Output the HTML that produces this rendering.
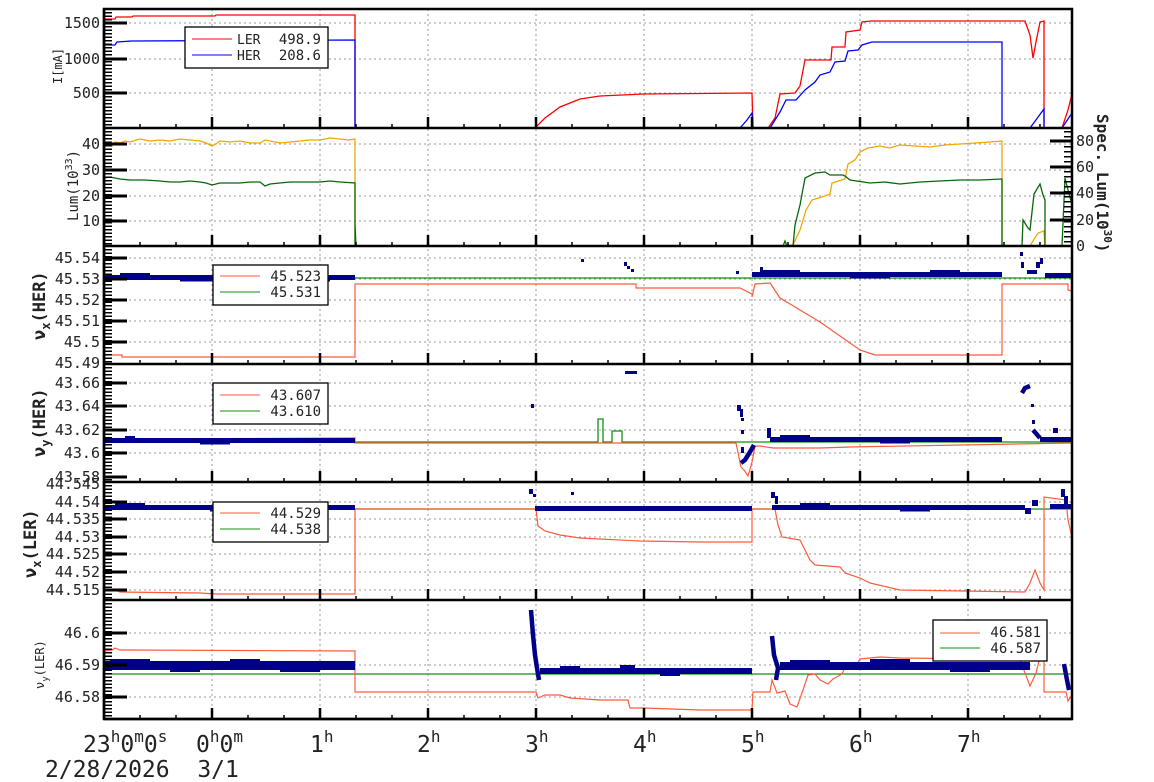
<!DOCTYPE html>
<html><head><meta charset="utf-8"><style>
html,body{margin:0;padding:0;background:#fff;}
svg{display:block;}
text{font-family:"DejaVu Sans Mono","Liberation Mono",monospace;fill:#222;}
.g{stroke:#999;stroke-width:1;stroke-dasharray:2 3;fill:none;}
.ax{stroke:#000;stroke-width:2.5;fill:none;}
.mj{stroke:#000;stroke-width:3;}
.r{stroke:#ff5a3c;stroke-width:1.2;fill:none;}
.rr{stroke:#f00;stroke-width:1.3;fill:none;}
.b{stroke:#00f;stroke-width:1.3;fill:none;}
.gr{stroke:#139013;stroke-width:1.3;fill:none;}
.dg{stroke:#0a660a;stroke-width:1.3;fill:none;}
.or{stroke:#f0a800;stroke-width:1.3;fill:none;}
.nv{stroke:#00008b;stroke-width:4.5;fill:none;}
.nd{fill:#00008b;}
.tl{font-size:15px;text-anchor:end;}
.lg{font-size:14px;text-anchor:end;}
</style></head><body>
<svg width="1154" height="782" viewBox="0 0 1154 782" xmlns="http://www.w3.org/2000/svg">
<g class="g">
<path d="M212 9V719M320 9V719M428 9V719M536 9V719M644 9V719M752 9V719M860 9V719M968 9V719"/>
<path d="M104 23H1072M104 59H1072M104 93H1072"/>
<path d="M104 144H1072M104 170H1072M104 196H1072M104 221H1072"/>
<path d="M104 258H1072M104 279H1072M104 300H1072M104 321H1072M104 342H1072"/>
<path d="M104 383H1072M104 406H1072M104 430H1072M104 453H1072"/>
<path d="M104 502H1072M104 519H1072M104 537H1072M104 554H1072M104 572H1072M104 590H1072"/>
<path d="M104 633H1072M104 665H1072M104 697H1072"/>
</g>

<!-- Panel 1 -->
<polyline class="rr" points="104,19 115,19 116,17 132,17 133,16 215,16 216,15 355,15 355,128 535,128 545,118 560,107 580,99 600,96 644,94 752,93 753,128 768,128 775,118 780,94 795,93 800,86 805,60 831,60 832,47 845,47 846,32 860,30 862,22 871,21 1025,21 1030,35 1033,58 1036,42 1040,22 1044,21 1044,128 1062,128 1068,110 1072,94"/>
<polyline class="b" points="104,45 115,45 117,42 132,41 355,40 355,128 740,128 747,120 752,113 753,128 770,128 780,112 786,100 796,100 805,90 815,82 820,75 830,72 835,62 845,61 848,51 858,50 862,45 872,42 1002,42 1002,128 1030,128 1044,109 1044,128 1062,128 1072,113"/>
<rect x="185" y="27" width="143" height="41" fill="#fff" stroke="#000" stroke-width="1.3"/>
<line x1="192" y1="39" x2="232" y2="39" stroke="#f00"/>
<line x1="192" y1="55" x2="232" y2="55" stroke="#00f"/>
<text x="237" y="44" font-size="13">LER</text><text x="321" y="44" class="lg">498.9</text>
<text x="237" y="60" font-size="13">HER</text><text x="321" y="60" class="lg">208.6</text>

<!-- Panel 2 -->
<polyline class="or" points="104,147 108,144 112,146 115,142 120,143 125,141 130,142 140,139 150,141 160,140 170,141 180,139 190,140 200,141 206,143 212,146 216,144 220,141 230,142 240,141 250,143 260,143 265,140 270,141 280,143 290,142 300,141 310,140 320,140 330,138 340,139 348,140 355,139 355,246 785,246 793,245 800,230 806,210 812,200 822,197 830,194 832,183 845,179 848,164 855,160 860,152 868,148 880,146 890,148 900,145 915,146 930,147 945,145 960,144 975,143 990,142 1002,141 1002,246 1030,246 1038,233 1044,231 1045,246 1072,246"/>
<polyline class="dg" points="104,178 110,177 120,179 130,180 145,180 160,181 170,182 180,182 190,181 200,182 206,183 212,185 220,183 240,183 250,182 260,182 265,186 270,184 280,183 290,182 300,182 320,182 330,181 340,182 355,183 355,246 355,224 356,246 783,246 785,241 787,246 793,246 795,225 800,205 805,178 815,173 825,172 830,175 843,175 845,176 850,180 870,183 885,182 900,184 920,182 940,181 960,180 980,180 1002,179 1002,246 1022,246 1023,220 1028,228 1030,230 1034,194 1040,184 1043,195 1045,200 1045,246 1062,246 1065,178 1068,190 1072,205"/>

<!-- Panel 3 -->
<line x1="104" y1="278" x2="1072" y2="278" class="gr"/>
<polyline class="r" points="104,355 122,355 122,357 355,357 355,284 636,284 636,288 740,288 752,294 752,297 755,284 770,283 780,298 800,310 820,322 840,336 860,350 875,355 1002,355 1002,284 1068,284 1068,290 1072,291"/>
<g class="nd">
<rect x="104" y="275" width="251" height="5"/>
<rect x="120" y="273" width="30" height="2"/><rect x="180" y="280" width="40" height="1.5"/><rect x="250" y="273" width="25" height="2"/><rect x="300" y="280" width="30" height="1.5"/>
<rect x="752" y="272" width="250" height="5"/>
<rect x="760" y="270" width="40" height="2"/><rect x="850" y="277" width="40" height="1.5"/><rect x="930" y="270" width="30" height="2"/>
<rect x="1045" y="273" width="27" height="5"/>
<rect x="581" y="259" width="3" height="3"/><rect x="624" y="262" width="3" height="4"/><rect x="627" y="266" width="3" height="3"/><rect x="631" y="269" width="3" height="3"/><rect x="736" y="271" width="3" height="3"/><rect x="760" y="267" width="3" height="4"/><rect x="1020" y="252" width="3" height="4"/><rect x="1021" y="262" width="3" height="6"/><rect x="1036" y="262" width="4" height="6"/><rect x="1040" y="258" width="3" height="6"/><rect x="1027" y="270" width="10" height="4"/></g>
<rect x="213" y="265" width="115" height="40" fill="#fff" stroke="#000" stroke-width="1.3"/>
<line x1="220" y1="276" x2="260" y2="276" stroke="#ff5a3c"/>
<line x1="220" y1="292" x2="260" y2="292" stroke="#139013"/>
<text x="321" y="281" class="lg">45.523</text><text x="321" y="297" class="lg">45.531</text>

<!-- Panel 4 -->
<polyline class="gr" points="104,442 598,442 598,419 603,419 603,442 612,442 612,431 622,431 622,442 1072,442"/>
<polyline class="r" points="104,441 130,441 133,439 355,438 355,443 735,443 736,443 741,467 744,470 748,476 752,462 755,446 760,446 773,448 820,448 850,447 1072,443"/>
<g class="nd">
<rect x="104" y="438" width="251" height="5"/>
<rect x="125" y="436" width="10" height="2"/><rect x="200" y="443" width="30" height="1.5"/>
<rect x="770" y="437" width="232" height="5"/>
<rect x="780" y="435" width="30" height="2"/><rect x="880" y="442" width="30" height="1.5"/>
<rect x="1040" y="437" width="32" height="5"/>
</g>
<polyline class="nv" stroke-width="3" points="741,463 745,460 750,452 754,445"/>
<polyline class="nv" stroke-width="3" points="1022,393 1025,388 1030,386"/>
<polyline class="nv" stroke-width="3" points="1033,430 1040,438"/>
<g class="nd"><rect x="531" y="404" width="3" height="4"/><rect x="625" y="371" width="12" height="3"/><rect x="737" y="405" width="4" height="6"/><rect x="740" y="409" width="3" height="8"/><rect x="741" y="418" width="3" height="3"/><rect x="741" y="430" width="3" height="4"/><rect x="741" y="447" width="3" height="6"/><rect x="767" y="428" width="4" height="10"/><rect x="1031" y="404" width="3" height="3"/><rect x="1032" y="420" width="3" height="4"/><rect x="1053" y="428" width="5" height="5"/></g>
<rect x="213" y="383" width="115" height="41" fill="#fff" stroke="#000" stroke-width="1.3"/>
<line x1="220" y1="395" x2="260" y2="395" stroke="#ff5a3c"/>
<line x1="220" y1="411" x2="260" y2="411" stroke="#139013"/>
<text x="321" y="400" class="lg">43.607</text><text x="321" y="416" class="lg">43.610</text>

<!-- Panel 5 -->
<line x1="104" y1="509" x2="1072" y2="509" class="gr"/>
<polyline class="r" points="104,589 115,590 120,592 200,593 216,594 355,594 355,509 536,509 538,526 545,531 560,535 580,538 640,541 700,542 752,542 752,509 775,509 778,525 782,537 800,540 810,560 815,565 840,567 845,573 860,578 870,583 900,590 1025,592 1030,583 1035,570 1040,583 1044,590 1044,497 1066,500 1068,520 1072,537"/>
<g class="nd">
<rect x="104" y="505" width="251" height="5"/>
<rect x="115" y="503" width="30" height="2"/><rect x="210" y="510" width="30" height="1.5"/><rect x="290" y="503" width="20" height="2"/>
<rect x="535" y="506" width="217" height="5"/>
<rect x="772" y="505" width="253" height="5"/>
<rect x="800" y="503" width="30" height="2"/><rect x="900" y="510" width="30" height="1.5"/>
<rect x="1050" y="504" width="22" height="5"/>
<rect x="529" y="489" width="4" height="5"/><rect x="533" y="494" width="3" height="3"/><rect x="571" y="492" width="3" height="3"/><rect x="771" y="492" width="4" height="6"/><rect x="775" y="496" width="3" height="8"/><rect x="1025" y="508" width="6" height="6"/><rect x="1032" y="500" width="6" height="6"/><rect x="1061" y="489" width="4" height="8"/><rect x="1064" y="496" width="4" height="8"/></g>
<rect x="213" y="502" width="115" height="40" fill="#fff" stroke="#000" stroke-width="1.3"/>
<line x1="220" y1="513" x2="260" y2="513" stroke="#ff5a3c"/>
<line x1="220" y1="529" x2="260" y2="529" stroke="#139013"/>
<text x="321" y="518" class="lg">44.529</text><text x="321" y="534" class="lg">44.538</text>

<!-- Panel 6 -->
<line x1="104" y1="674" x2="1072" y2="674" class="gr"/>
<polyline class="r" points="104,651 112,650 115,648 120,650 355,651 355,692 536,692 538,698 545,695 560,695 570,698 600,700 628,700 630,708 644,708 700,710 752,710 753,692 770,692 772,680 777,693 785,691 790,704 797,707 803,690 808,675 815,674 820,680 828,684 833,679 842,674 846,665 850,669 856,666 860,659 880,657 900,658 980,659 1020,660 1030,686 1036,673 1040,657 1044,657 1044,692 1066,692 1068,701 1072,695"/>
<g class="nd">
<rect x="104" y="661" width="251" height="9"/>
<rect x="110" y="659" width="40" height="2"/><rect x="170" y="670" width="30" height="2"/><rect x="230" y="659" width="30" height="2"/><rect x="280" y="670" width="40" height="2"/>
<rect x="540" y="668" width="212" height="6"/>
<rect x="560" y="666" width="20" height="2"/><rect x="620" y="665" width="15" height="3"/><rect x="660" y="674" width="20" height="2"/>
<rect x="780" y="662" width="250" height="8"/>
<rect x="790" y="660" width="40" height="2"/><rect x="870" y="659" width="40" height="3"/><rect x="950" y="670" width="40" height="2"/>
</g>
<polyline class="nv" stroke-width="2.5" points="531,610 533,635 535,655 537,668 539,680"/>
<polyline class="nv" stroke-width="2.5" points="772,636 774,655 778,668 776,680"/>
<polyline class="nv" stroke-width="2.5" points="1064,664 1067,680 1069,690"/>
<rect x="933" y="620" width="114" height="41" fill="#fff" stroke="#000" stroke-width="1.3"/>
<line x1="940" y1="633" x2="980" y2="633" stroke="#ff5a3c"/>
<line x1="940" y1="648" x2="980" y2="648" stroke="#139013"/>
<text x="1041" y="637" class="lg">46.581</text><text x="1041" y="653" class="lg">46.587</text>

<g stroke="#000" stroke-width="1.5">
<path d="M108 12V128M108 131V246M108 249V364M108 367V482M108 485V600M108 603V719" stroke-width="8" stroke-dasharray="1.5 2"/>
</g>
<g class="mj">
<path d="M104 23H127M104 59H127M104 93H127M104 144H127M104 170H127M104 196H127M104 221H127M104 258H127M104 279H127M104 300H127M104 321H127M104 342H127M104 383H127M104 406H127M104 430H127M104 453H127M104 477H127M104 502H127M104 519H127M104 537H127M104 554H127M104 572H127M104 590H127M104 633H127M104 665H127M104 697H127"/>
<path d="M1072 141H1050M1072 167H1050M1072 193H1050M1072 220H1050"/>
</g>
<path d="M1068 131V246" stroke="#000" stroke-width="8" stroke-dasharray="1.5 3.5"/>
<g stroke="#000">
<path d="M212 128v-11M320 128v-11M428 128v-11M536 128v-11M644 128v-11M752 128v-11M860 128v-11M968 128v-11
M212 246v-11M320 246v-11M428 246v-11M536 246v-11M644 246v-11M752 246v-11M860 246v-11M968 246v-11
M212 364v-11M320 364v-11M428 364v-11M536 364v-11M644 364v-11M752 364v-11M860 364v-11M968 364v-11
M212 482v-11M320 482v-11M428 482v-11M536 482v-11M644 482v-11M752 482v-11M860 482v-11M968 482v-11
M212 600v-11M320 600v-11M428 600v-11M536 600v-11M644 600v-11M752 600v-11M860 600v-11M968 600v-11
M212 719v-11M320 719v-11M428 719v-11M536 719v-11M644 719v-11M752 719v-11M860 719v-11M968 719v-11" stroke-width="2.5"/>
<path d="M140 128v-4M176 128v-4M248 128v-4M284 128v-4M356 128v-4M392 128v-4M464 128v-4M500 128v-4M572 128v-4M608 128v-4M680 128v-4M716 128v-4M788 128v-4M824 128v-4M896 128v-4M932 128v-4M1004 128v-4M1040 128v-4
M140 246v-4M176 246v-4M248 246v-4M284 246v-4M356 246v-4M392 246v-4M464 246v-4M500 246v-4M572 246v-4M608 246v-4M680 246v-4M716 246v-4M788 246v-4M824 246v-4M896 246v-4M932 246v-4M1004 246v-4M1040 246v-4
M140 364v-4M176 364v-4M248 364v-4M284 364v-4M356 364v-4M392 364v-4M464 364v-4M500 364v-4M572 364v-4M608 364v-4M680 364v-4M716 364v-4M788 364v-4M824 364v-4M896 364v-4M932 364v-4M1004 364v-4M1040 364v-4
M140 482v-4M176 482v-4M248 482v-4M284 482v-4M356 482v-4M392 482v-4M464 482v-4M500 482v-4M572 482v-4M608 482v-4M680 482v-4M716 482v-4M788 482v-4M824 482v-4M896 482v-4M932 482v-4M1004 482v-4M1040 482v-4
M140 600v-4M176 600v-4M248 600v-4M284 600v-4M356 600v-4M392 600v-4M464 600v-4M500 600v-4M572 600v-4M608 600v-4M680 600v-4M716 600v-4M788 600v-4M824 600v-4M896 600v-4M932 600v-4M1004 600v-4M1040 600v-4
M140 719v-4M176 719v-4M248 719v-4M284 719v-4M356 719v-4M392 719v-4M464 719v-4M500 719v-4M572 719v-4M608 719v-4M680 719v-4M716 719v-4M788 719v-4M824 719v-4M896 719v-4M932 719v-4M1004 719v-4M1040 719v-4" stroke-width="1.5"/>
</g>
<rect x="104" y="9" width="968" height="710" class="ax" stroke-width="1.5"/>
<path class="ax" d="M104 128H1072M104 246H1072M104 364H1072M104 482H1072M104 600H1072M104 719H1072M104 9V719"/>

<g class="tl">
<text x="100" y="28">1500</text><text x="100" y="64">1000</text><text x="100" y="98">500</text>
<text x="100" y="149">40</text><text x="100" y="175">30</text><text x="100" y="201">20</text><text x="100" y="226">10</text>
<text x="100" y="263">45.54</text><text x="100" y="284">45.53</text><text x="100" y="305">45.52</text><text x="100" y="326">45.51</text><text x="100" y="347">45.5</text><text x="100" y="368">45.49</text>
<text x="100" y="388">43.66</text><text x="100" y="411">43.64</text><text x="100" y="435">43.62</text><text x="100" y="458">43.6</text><text x="100" y="482">43.58</text>
<text x="100" y="489">44.545</text><text x="100" y="507">44.54</text><text x="100" y="524">44.535</text><text x="100" y="542">44.53</text><text x="100" y="559">44.525</text><text x="100" y="577">44.52</text><text x="100" y="595">44.515</text>
<text x="100" y="638">46.6</text><text x="100" y="670">46.59</text><text x="100" y="702">46.58</text>
</g>
<g font-size="15">
<text x="1076" y="146">80</text><text x="1076" y="172">60</text><text x="1076" y="198">40</text><text x="1076" y="225">20</text><text x="1076" y="251">0</text>
</g>
<text transform="translate(62,84) rotate(-90)" font-size="12">I[mA]</text>
<text transform="translate(78,221) rotate(-90)" font-size="14">Lum(10<tspan font-size="10" dy="-6">33</tspan><tspan dy="6">)</tspan></text>
<text transform="translate(45,340) rotate(-90)" font-size="17" font-weight="bold">ν<tspan font-size="12" dy="5">x</tspan><tspan dy="-5">(HER)</tspan></text>
<text transform="translate(45,457) rotate(-90)" font-size="17" font-weight="bold">ν<tspan font-size="12" dy="5">y</tspan><tspan dy="-5">(HER)</tspan></text>
<text transform="translate(36,578) rotate(-90)" font-size="17" font-weight="bold">ν<tspan font-size="12" dy="5">x</tspan><tspan dy="-5">(LER)</tspan></text>
<text transform="translate(44,689) rotate(-90)" font-size="12">ν<tspan font-size="9" dy="4">y</tspan><tspan dy="-4">(LER)</tspan></text>
<text transform="translate(1097,114) rotate(90)" font-size="16" font-weight="bold">Spec. Lum(10<tspan font-size="11" dy="-7">30</tspan><tspan dy="7">)</tspan></text>

<g font-size="23">
<text x="83" y="752">23<tspan font-size="16" dy="-10">h</tspan><tspan dy="10">0</tspan><tspan font-size="16" dy="-10">m</tspan><tspan dy="10">0</tspan><tspan font-size="16" dy="-10">s</tspan></text>
<text x="196" y="752">0<tspan font-size="16" dy="-10">h</tspan><tspan dy="10">0</tspan><tspan font-size="16" dy="-10">m</tspan></text>
<text x="310" y="752">1<tspan font-size="16" dy="-10">h</tspan></text>
<text x="417" y="752">2<tspan font-size="16" dy="-10">h</tspan></text>
<text x="525" y="752">3<tspan font-size="16" dy="-10">h</tspan></text>
<text x="633" y="752">4<tspan font-size="16" dy="-10">h</tspan></text>
<text x="741" y="752">5<tspan font-size="16" dy="-10">h</tspan></text>
<text x="849" y="752">6<tspan font-size="16" dy="-10">h</tspan></text>
<text x="957" y="752">7<tspan font-size="16" dy="-10">h</tspan></text>
<text x="45" y="777">2/28/2026&#160; 3/1</text>
</g>
</svg>
</body></html>
